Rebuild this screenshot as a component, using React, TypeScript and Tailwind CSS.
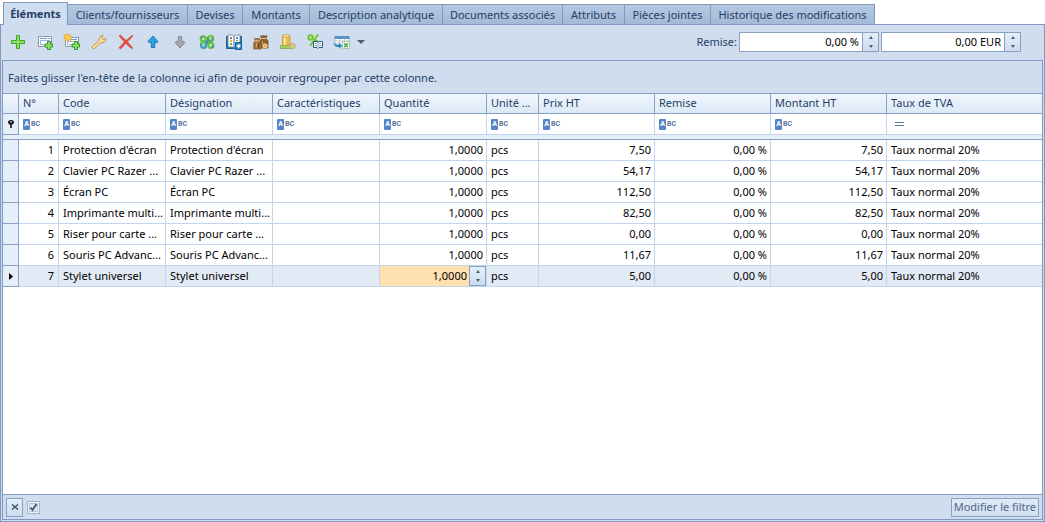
import { useState } from 'react';
import type { ReactNode } from 'react';

const tabs = [
  { label: 'Éléments', width: 'w-[65px]' },
  { label: 'Clients/fournisseurs', width: 'w-[120px]' },
  { label: 'Devises', width: 'w-[55px]' },
  { label: 'Montants', width: 'w-[67px]' },
  { label: 'Description analytique', width: 'w-[133px]' },
  { label: 'Documents associés', width: 'w-[120px]' },
  { label: 'Attributs', width: 'w-[62px]' },
  { label: 'Pièces jointes', width: 'w-[86px]' },
  { label: 'Historique des modifications', width: 'w-[164px]' },
];

const columns = [
  { label: 'N°', width: 'w-[40px]' },
  { label: 'Code', width: 'w-[107px]' },
  { label: 'Désignation', width: 'w-[107px]' },
  { label: 'Caractéristiques', width: 'w-[107px]' },
  { label: 'Quantité', width: 'w-[107px]' },
  { label: 'Unité ...', width: 'w-[52px]' },
  { label: 'Prix HT', width: 'w-[116px]' },
  { label: 'Remise', width: 'w-[116px]' },
  { label: 'Montant HT', width: 'w-[116px]' },
  { label: 'Taux de TVA', width: '' },
];

const items = [
  { code: "Protection d'écran", price: '7,50' },
  { code: 'Clavier PC Razer ...', price: '54,17' },
  { code: 'Écran PC', price: '112,50' },
  { code: 'Imprimante multi...', price: '82,50' },
  { code: 'Riser pour carte ...', price: '0,00' },
  { code: 'Souris PC Advanc...', price: '11,67' },
  { code: 'Stylet universel', price: '5,00' },
];

const smallPlus = (
  <path d="M10.5 7.5h3v2.500h2v3h-2v2.500h-3v-2.500h-2.500v-3h2.500z" fill="#8bdc68" stroke="#2f9a22" />
);

const tools: { name: string; icon: ReactNode }[] = [
  {
    name: 'Ajouter',
    icon: <path d="M6.5 1.5h3v5h5v3h-5v5h-3v-5h-5v-3h5z" fill="#8ae05c" stroke="#3fa62b" />,
  },
  {
    name: 'Ajouter une fiche',
    icon: (
      <>
        <path d="M1.5 2.5h13v10h-13z" fill="#fbfdff" stroke="#8e959e" />
        <path d="M3 4.5h7M11 4.5h2" stroke="#5f9bdd" />
        <path d="M3.5 6.5h9v4h-9z" fill="#fff" stroke="#8fb6e0" />
        {smallPlus}
      </>
    ),
  },
  {
    name: 'Nouvelle fiche',
    icon: (
      <>
        <path d="M1.5 3.5h13v9h-13z" fill="#fbfdff" stroke="#8e959e" />
        <path d="M7 5.5h6" stroke="#5f9bdd" />
        <path d="M3.5 7.5h9v3h-9z" fill="#fff" stroke="#8fb6e0" />
        <path
          d="M3.5-.5l1 1.700 1.900-.7-.4 2 2 .8-1.700 1.100.7 1.900-2-.4-1 1.900-1.100-1.800-1.900.7.400-2-1.900-.9 1.700-1.100-.7-1.900 2 .4z"
          fill="#ffcf4a"
          stroke="#e09b22"
          strokeWidth=".7"
        />
        {smallPlus}
      </>
    ),
  },
  {
    name: 'Modifier',
    icon: (
      <path
        d="M2 14.600c-1-.4-1.200-1.600-.5-2.300L8 6.600C7.500 4 9 1.600 12 1.300L10.800 4.200l1.200 1.200 2.900-1c.1 2.900-2 4.800-4.900 4.300l-6.200 5.500c-.5.5-1.200.6-1.800.4z"
        fill="#fbdc9a"
        stroke="#bb8f48"
        strokeWidth=".9"
      />
    ),
  },
  {
    name: 'Supprimer',
    icon: (
      <path
        d="M1 2l1.500-.8 5.600 5.300L14 1.400l1 .4-5.500 6 5.200 6.200-1 .8-6-5.400L2.600 15 1 13.800 6.400 8z"
        fill="#ee4a3c"
        stroke="#cf2a22"
        strokeWidth=".5"
      />
    ),
  },
  {
    name: 'Monter',
    icon: <path d="M8 2l5 5.500-1.500 1.500-1.800-1.200v5.700H6.300V7.800L4.500 9 3 7.500z" fill="#2ea3df" stroke="#1272b4" strokeWidth=".9" />,
  },
  {
    name: 'Descendre',
    icon: <path d="M8 14l5-5.500L11.500 7 9.700 8.200V2.500H6.300v5.700L4.500 7 3 8.500z" fill="#a5a7ab" stroke="#85888d" strokeWidth=".9" />,
  },
  {
    name: 'Assembler',
    icon: (
      <g fill="none" strokeWidth="2.4">
        <circle cx="4.300" cy="5" r="2.500" stroke="#6fc63a" />
        <circle cx="11.500" cy="4.500" r="2.500" stroke="#4aab62" />
        <circle cx="4.500" cy="11.300" r="2.500" stroke="#3a9fc0" />
        <circle cx="11.700" cy="11.300" r="2.500" stroke="#6fc63a" />
        <path d="M9.500 3c1-1.500 3.500-1.300 4.200.5M2.500 10c.8-1.200 2.700-1.300 3.700-.3" stroke="#7bd244" strokeWidth="2" />
        <path d="M6.500 6.500l3 3M9.500 6.500l-3 3M12 13.800c1.500 0 2.500-1 2.500-2.500M2 4c.3-.8 1-1.400 2-1.500" stroke="#348fb5" strokeWidth="1.500" />
      </g>
    ),
  },
  {
    name: 'Catalogue',
    icon: (
      <>
        <path d="M.5 2.500h15v12H.5z" fill="#3d83b2" stroke="#20608e" />
        <path d="M2 1h4.500L8 2.500 9.500 1H14v12H9.500L8 14l-1.500-1H2z" fill="#fff" stroke="#376f99" strokeWidth=".7" />
        <path d="M8 2.500V14" stroke="#376f99" />
        <path d="M4 3h2v2H4z" fill="#e4574b" />
        <path d="M4 6h2v2H4z" fill="#f1a63b" />
        <path d="M4 9h2v2H4z" fill="#5caf45" />
        <path d="M10 3h2v2h-2z" fill="#3e8fd0" />
        <path d="M10 6h2v1h-2z" fill="#5caf45" />
        <path d="M9.500 8.500h6v7h-6z" fill="#2a8bc8" stroke="#155e93" />
        <path d="M10.500 11.200h1.500V9.500l3 2.500-3 2.500v-1.700h-1.500z" fill="#fff" />
      </>
    ),
  },
  {
    name: 'Lots',
    icon: (
      <>
        <path d="M7.500 1.500l2 .7 1-1 1.500 1 2-.7-.9 3 2 2.500v7H7V7l1.500-2.500z" fill="#8f602b" stroke="#64401c" strokeWidth=".6" />
        <path d="M1.500 4.500l1.500.5 1-.7 1.500.5 1.200-.3-.7 2 2 2.500v6H.7V9l1.500-2.500z" fill="#a67838" stroke="#64401c" strokeWidth=".6" />
        <path d="M8.500 4.500h5M2 6.800h4" stroke="#f0cb7c" />
        <path d="M3.500 9v4M9.500 7v4" stroke="#d5a85a" />
        <path d="M5.500 9v5" stroke="#54351a" />
        <circle cx="12" cy="12" r="2.600" fill="#f6e2ab" stroke="#b58d45" />
        <circle cx="12" cy="12" r=".9" fill="#fff" stroke="#a98037" strokeWidth=".7" />
      </>
    ),
  },
  {
    name: 'Stock',
    icon: (
      <>
        <path d="M.5 11.500h10v3H.5z" fill="#9bd063" stroke="#6cac3c" strokeWidth=".7" />
        <path d="M2.500 2v8.500c1 1.300 6.500 1.300 7.500 0V2z" fill="#e9bf4b" stroke="#bd8e2e" strokeWidth=".7" />
        <path d="M4.700 3v8" stroke="#fff0ae" strokeWidth="1.800" />
        <ellipse cx="6.200" cy="2" rx="3.800" ry="1.300" fill="#fbe49a" stroke="#bd8e2e" strokeWidth=".7" />
        <circle cx="12.500" cy="12" r="2.700" fill="#f0dba0" stroke="#b8a16a" />
        <circle cx="12.500" cy="12" r=".9" fill="#fff" stroke="#aa8b4e" strokeWidth=".7" />
      </>
    ),
  },
  {
    name: 'Remises',
    icon: (
      <>
        <g fill="none" stroke="#72c62e" strokeWidth="2">
          <circle cx="3.500" cy="3.500" r="2.200" />
          <circle cx="8.500" cy="8.500" r="2" />
          <path d="M11 .5L3 12" />
        </g>
        <path d="M6.500 7.500h3.500l1 .7 1-.7h3.500v6H12l-1 1-1-1H6.500z" fill="#fff" stroke="#2c5b80" />
        <path d="M11 8.500v5" stroke="#7795ad" />
        <path d="M7.800 9.500h2M7.800 11.500h2M12.200 9.500h2M12.200 11.500h2" stroke="#668eac" strokeWidth=".8" />
      </>
    ),
  },
  {
    name: 'Exporter',
    icon: (
      <>
        <path d="M1 2.500h14v9H1z" fill="#fff" stroke="#aab4bf" strokeWidth=".8" />
        <path d="M.5 2h15v3H.5z" fill="#5792cf" />
        <path d="M1 7h14M1 9h14M5.500 5v6M10.500 5v6" stroke="#b6bfc9" strokeWidth=".8" />
        <path d="M0 8c.5 2 2.500 2.700 5 2.500V8.800L8.300 11.700 5 14.500V13C1.500 13.200-.8 11 0 8z" fill="#2d86bd" />
        <path d="M8.500 7.500h7v7h-7z" fill="#f5fff5" stroke="#9cc09a" strokeWidth=".8" />
        <path d="M10.200 9.200l3.600 4M13.800 9.200l-3.600 4" stroke="#44a349" strokeWidth="1.300" />
      </>
    ),
  },
];

function StepButtons({ label, className }: { label: string; className: string }) {
  return (
    <span className={`flex shrink-0 flex-col bg-gradient-to-b from-[#e3eefa] to-[#ccdcee] ${className}`}>
      <button type="button" aria-label={`Augmenter ${label}`} className="flex flex-1 items-center justify-center">
        <svg width="4" height="3" viewBox="0 0 4 3">
          <path d="M0 3l2-3 2 3z" fill="#4b5d75" />
        </svg>
      </button>
      <button type="button" aria-label={`Diminuer ${label}`} className="flex flex-1 items-center justify-center">
        <svg width="4" height="3" viewBox="0 0 4 3">
          <path d="M0 0h4L2 3z" fill="#4b5d75" />
        </svg>
      </button>
    </span>
  );
}

function DiscountField({ label, initial, id }: { label: string; initial: string; id: string }) {
  const [value, setValue] = useState(initial);

  return (
    <div className="flex h-5 w-[140px] border border-[#8aa1c3] bg-white">
      <input
        id={id}
        aria-label={label}
        value={value}
        onChange={(e) => setValue(e.target.value)}
        className="min-w-0 flex-1 pr-[3px] text-right text-black outline-none"
      />
      <StepButtons label={label} className="w-4 border-l border-[#8aa1c3]" />
    </div>
  );
}

function FilterIcon() {
  return (
    <span className="flex items-center font-['Roboto'] text-[7px] font-bold leading-none text-[#5b7396]">
      <span className="flex h-[11px] w-[7px] items-center justify-center rounded-[1px] bg-[#5485cb] text-white">A</span>
      <span className="pl-px">BC</span>
    </span>
  );
}

export default function App() {
  const [activeTab, setActiveTab] = useState('Éléments');
  const [quantity, setQuantity] = useState('1,0000');
  const [filterOn, setFilterOn] = useState(true);

  const cell = 'h-[21px] overflow-hidden whitespace-nowrap border-b border-r border-[#c3d5ec] px-1';
  const indicator = 'border-b border-r border-[#8aa1c3] bg-[#e5effa]';

  return (
    <div className="flex h-screen flex-col bg-white font-['Noto_Sans','Open_Sans',sans-serif] text-[11px] leading-4 text-[#253e66]">
      <div role="tablist" className="flex h-6 shrink-0 items-end pl-[3px]">
        {tabs.map((tab) => (
          <button
            key={tab.label}
            type="button"
            role="tab"
            aria-selected={tab.label === activeTab}
            onClick={() => setActiveTab(tab.label)}
            className={`${tab.width} shrink-0 whitespace-nowrap border-t border-r border-[#8199be] ${
              tab.label === activeTab
                ? 'z-10 -mb-px h-[23px] border-l bg-[#d0ddee] font-bold'
                : 'h-5 bg-gradient-to-b from-[#b4c8e1] to-[#a3bad8]'
            }`}
          >
            {tab.label}
          </button>
        ))}
      </div>

      <main className="flex min-h-0 flex-1 flex-col border border-[#8199be] bg-[#d0ddee] px-px pb-px">
        <div className="flex h-[35px] shrink-0 items-center justify-between pb-px pl-[2px] pr-[22px]">
          <div className="flex items-center">
            {tools.map((tool) => (
              <button key={tool.name} type="button" aria-label={tool.name} className="flex h-6 w-[27px] items-center justify-center">
                <svg width="16" height="16" viewBox="0 0 16 16" className="overflow-visible">
                  {tool.icon}
                </svg>
              </button>
            ))}
            <button type="button" aria-label="Plus d'options" className="flex h-6 w-3 items-center justify-center">
              <svg width="8" height="4" viewBox="0 0 8 4">
                <path d="M0 0h8L4 4z" fill="#4b5d75" />
              </svg>
            </button>
          </div>
          <div className="flex items-center">
            <label htmlFor="discount-rate" className="pr-[2px]">Remise:</label>
            <DiscountField id="discount-rate" label="Remise en pourcentage" initial="0,00 %" />
            <span className="w-[2px]" />
            <DiscountField id="discount-amount" label="Remise en euros" initial="0,00 EUR" />
          </div>
        </div>

        <section className="flex min-h-0 flex-1 flex-col border border-[#8199be] bg-white">
          <div className="flex h-8 shrink-0 items-center bg-[#d0ddee] pl-[5px] pt-[2px]">
            Faites glisser l'en-tête de la colonne ici afin de pouvoir regrouper par cette colonne.
          </div>

          <div className="min-h-0 flex-1 overflow-hidden">
            <table className="w-full table-fixed border-separate border-spacing-0 border-t border-[#8aa1c3]">
              <colgroup>
                <col className="w-4" />
                {columns.map((col) => (
                  <col key={col.label} className={col.width} />
                ))}
              </colgroup>
              <thead>
                <tr className="bg-gradient-to-b from-[#f0f6fd] to-[#dce8f6]">
                  <th className="h-5 border-b border-r border-[#8aa1c3]" />
                  {columns.map((col) => (
                    <th
                      key={col.label}
                      scope="col"
                      className="h-5 whitespace-nowrap border-b border-r border-[#8aa1c3] px-1 pb-[2px] text-left font-normal last:border-r-0"
                    >
                      {col.label}
                    </th>
                  ))}
                </tr>
                <tr>
                  <td className={`${indicator} h-[21px]`}>
                    <svg width="6" height="8" viewBox="0 0 6 8" className="mx-auto">
                      <path d="M3 0C1 0 0 1 0 2.300 0 3.600 1 4 2.200 4.800V8h1.600V4.800C5 4 6 3.600 6 2.300 6 1 5 0 3 0z" fill="#111" />
                      <path d="M2 1.500h2v1H2z" fill="#fff" />
                    </svg>
                  </td>
                  {columns.map((col) => (
                    <td key={col.label} className={`${cell} last:border-r-0`}>
                      {col.label === 'Taux de TVA' ? (
                        <svg width="9" height="4" viewBox="0 0 9 4" className="ml-1">
                          <path d="M0 .5h9M0 3.500h9" stroke="#5f7698" />
                        </svg>
                      ) : (
                        <FilterIcon />
                      )}
                    </td>
                  ))}
                </tr>
                <tr>
                  <td colSpan={11} className="h-[5px] border-b border-[#8aa1c3] bg-[#e5effa]" />
                </tr>
              </thead>
              <tbody className="text-black">
                {items.map((item, i) => {
                  const selected = i === items.length - 1;
                  return (
                    <tr key={item.code} className={selected ? 'bg-[#e2ebf5]' : 'bg-white'}>
                      <td className={indicator}>
                        {selected && (
                          <svg width="4" height="7" viewBox="0 0 4 7" className="mx-auto">
                            <path d="M0 0l4 3.500L0 7z" fill="#000" />
                          </svg>
                        )}
                      </td>
                      <td className={`${cell} text-right`}>{i + 1}</td>
                      <td className={cell}>{item.code}</td>
                      <td className={cell}>{item.code}</td>
                      <td className={cell} />
                      {selected ? (
                        <td className="h-[21px] border-b border-r border-[#c3d5ec] p-0">
                          <div className="flex h-5 bg-[#ffe0b0]">
                            <input
                              aria-label="Quantité"
                              value={quantity}
                              onChange={(e) => setQuantity(e.target.value)}
                              className="min-w-0 flex-1 pr-[2px] text-right outline-none"
                            />
                            <StepButtons label="la quantité" className="w-[17px] border border-[#8aa1c3]" />
                          </div>
                        </td>
                      ) : (
                        <td className={`${cell} pr-[3px] text-right`}>1,0000</td>
                      )}
                      <td className={cell}>pcs</td>
                      <td className={`${cell} pr-[3px] text-right`}>{item.price}</td>
                      <td className={`${cell} pr-[3px] text-right`}>0,00 %</td>
                      <td className={`${cell} pr-[3px] text-right`}>{item.price}</td>
                      <td className={`${cell} border-r-0`}>Taux normal 20%</td>
                    </tr>
                  );
                })}
              </tbody>
            </table>
          </div>

          <footer className="flex h-[25px] shrink-0 items-center justify-between border-t border-[#8aa1c3] bg-[#d0ddee] px-[3px]">
            <div className="flex items-center gap-1">
              <button
                type="button"
                aria-label="Fermer le filtre"
                className="flex h-[19px] w-[17px] items-center justify-center border border-[#8aa1c3] bg-gradient-to-b from-[#e3eefa] to-[#ccdcee]"
              >
                <svg width="8" height="6" viewBox="0 0 8 6">
                  <path d="M1 .5l6 5M7 .5l-6 5" stroke="#4b5d75" strokeWidth="1.6" />
                </svg>
              </button>
              <label className="relative flex h-[13px] w-[13px] items-center justify-center border border-[#9fb2cd] bg-[#eef4fb]">
                <input
                  type="checkbox"
                  aria-label="Activer le filtre"
                  checked={filterOn}
                  onChange={(e) => setFilterOn(e.target.checked)}
                  className="absolute inset-0 appearance-none"
                />
                {filterOn && (
                  <svg width="9" height="9" viewBox="0 0 9 9">
                    <path d="M.5 .5h8v8h-8z" fill="#dfe9f5" stroke="#b4c4da" />
                    <path d="M1.5 4.500l2 2.500L7.500 1" fill="none" stroke="#3f5470" strokeWidth="1.8" />
                  </svg>
                )}
              </label>
            </div>
            <button
              type="button"
              className="h-[19px] whitespace-nowrap border border-[#8aa1c3] bg-gradient-to-b from-[#dfeaf8] to-[#d0deef] px-[2px] text-[#53688a]"
            >
              Modifier le filtre
            </button>
          </footer>
        </section>
      </main>
    </div>
  );
}
